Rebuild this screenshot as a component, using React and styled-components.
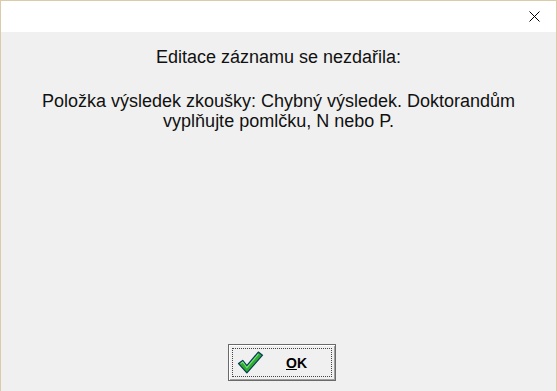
import React from 'react';
import styled, { createGlobalStyle } from 'styled-components';

const Global = createGlobalStyle`
  html, body { margin: 0; padding: 0; background: #f0f0f0; }
  #root { width: 557px; height: 391px; }
`;

const Frame = styled.div`
  width: 557px;
  height: 391px;
  box-sizing: border-box;
  border: 1px solid #dccaa8;
  border-bottom: none;
  display: flex;
  flex-direction: column;
  font-family: "Liberation Sans", Arial, sans-serif;
  color: #000;
`;

const TitleBar = styled.div`
  height: 31px;
  flex-shrink: 0;
  background: #fff;
  display: flex;
  justify-content: flex-end;
  align-items: center;
`;

const CloseBtn = styled.div`
  width: 46px;
  height: 31px;
  display: flex;
  align-items: center;
  justify-content: center;
  margin-right: -1px;
`;

const Body = styled.div`
  flex: 1;
  background: #f0f0f0;
  display: flex;
  flex-direction: column;
  align-items: center;
  padding-top: 15px;
`;

const Line = styled.div`
  font-size: 18px;
  line-height: 20px;
  text-align: center;
  color: #111;
  margin-bottom: ${p => p.$gap || 0}px;
`;

const Spacer = styled.div`
  flex: 1;
`;

const Button = styled.button`
  width: 108px;
  height: 37px;
  margin: 0 0 10px 7px;
  padding: 3px;
  box-sizing: border-box;
  border: 1px solid #6a6a6a;
  background: #f0f0f0;
  box-shadow: inset 1px 1px #ffffff, inset -1px -1px #a0a0a0;
  display: flex;
  font-family: "Liberation Sans", Arial, sans-serif;
`;

const Focus = styled.span`
  flex: 1;
  border: 1px dotted #444;
  display: flex;
  align-items: center;
  padding-left: 3px;
`;

const Label = styled.span`
  font-size: 14px;
  font-weight: bold;
  margin-left: 22px;
  color: #000;
  u { text-decoration: underline; }
`;

const Check = () => (
  <svg width="28" height="25" viewBox="0 0 26 24">
    <path d="M2 13 L6 10 L10 15 L21 2 L25 5 L10 22 Z" fill="#2eae2e" stroke="#0a3a5a" strokeWidth="1.2" strokeLinejoin="round" />
    <path d="M4 13 L6 11.5 L10 17 L21 4" fill="none" stroke="#7fe07f" strokeWidth="1" />
  </svg>
);

export default function App() {
  return (
    <>
      <Global />
      <Frame>
        <TitleBar>
          <CloseBtn>
            <svg width="11" height="11" viewBox="0 0 11 11">
              <path d="M0.5 0.5 L10.5 10.5 M10.5 0.5 L0.5 10.5" stroke="#000" strokeWidth="1" />
            </svg>
          </CloseBtn>
        </TitleBar>
        <Body>
          <Line $gap={24}>Editace záznamu se nezdařila:</Line>
          <Line>Položka výsledek zkoušky: Chybný výsledek. Doktorandům</Line>
          <Line>vyplňujte pomlčku, N nebo P.</Line>
          <Spacer />
          <Button>
            <Focus>
              <Check />
              <Label><u>O</u>K</Label>
            </Focus>
          </Button>
        </Body>
      </Frame>
    </>
  );
}
